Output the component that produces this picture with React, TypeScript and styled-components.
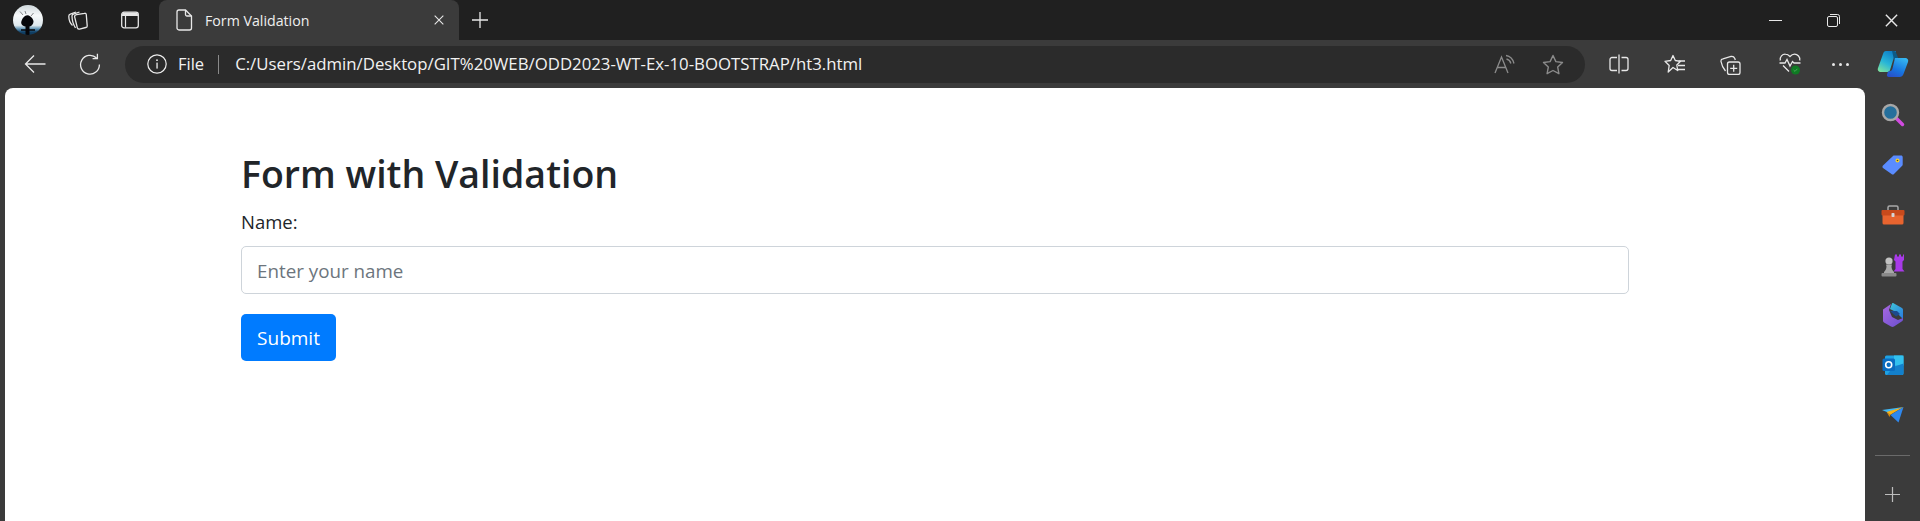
import React, { ReactElement } from "react";
import styled, { createGlobalStyle } from "styled-components";

const stroke = { fill: "none", stroke: "currentColor", strokeWidth: 1.3 };

function Avatar(): ReactElement {
  return (
    <svg width="30" height="30" viewBox="0 0 30 30">
      <defs>
        <linearGradient id="moon" x1="0" y1="0" x2="0" y2="1">
          <stop offset="0" stopColor="#cfd8dc" />
          <stop offset="0.35" stopColor="#f7f9fa" />
          <stop offset="0.68" stopColor="#dfe9ee" />
          <stop offset="0.8" stopColor="#5f93b4" />
          <stop offset="0.9" stopColor="#0f3f66" />
          <stop offset="1" stopColor="#123a58" />
        </linearGradient>
        <clipPath id="disc">
          <circle cx="15" cy="15" r="15" />
        </clipPath>
      </defs>
      <g clipPath="url(#disc)">
        <rect width="30" height="30" fill="url(#moon)" />
        <path d="M12.500 30V21.500C9 21 7.500 18.500 8.500 16c.7-2.300 2-3.700 3.500-5 1.700-1.300 3.800-1 5 .3 1.700 1.300 3.500 3.200 3.500 5.200 0 2.700-1.800 4.500-4 5V30z" fill="#060609" />
        <path d="M8 25h14" stroke="#060609" strokeWidth="1.600" />
        <path d="M10 10L7 6.500M13 9l-1-3M18 11l2.500-3" stroke="#55585c" strokeWidth="0.7" />
      </g>
    </svg>
  );
}

function CollectionsTabs(): ReactElement {
  return (
    <svg width="22" height="22" viewBox="0 0 22 22" {...stroke}>
      <path d="M10.500 5.600l8-1.300c1-.2 1.700.5 1.800 1.400l.9 11c.1 1-.5 1.600-1.400 1.800l-6.300 1.600c-1 .2-1.700-.2-2.100-1.100L8.700 8.200c-.3-1.300.6-2.400 1.800-2.600z" />
      <path d="M9.500 19C7.300 15.500 6 11 6 7c0-1 .6-1.800 1.500-2l6-2" />
      <path d="M6.500 16.500C4 14 2.800 10.500 2.800 7.200c0-1 .5-1.700 1.500-2L10 3" />
    </svg>
  );
}

function VerticalTabs(): ReactElement {
  return (
    <svg width="20" height="20" viewBox="0 0 20 20">
      <rect x="1.700" y="2.200" width="16.600" height="15.600" rx="2.400" fill="none" stroke="#e6e6e6" strokeWidth="1.300" />
      <path d="M2 6V4.400C2 3.200 3 2.400 4 2.400h12c1 0 2 .8 2 2V6z" fill="#e6e6e6" />
      <path d="M5.500 6v11.500" stroke="#e6e6e6" strokeWidth="1.200" />
    </svg>
  );
}

function DocIcon(): ReactElement {
  return (
    <svg width="18" height="22" viewBox="0 0 18 22" {...stroke}>
      <path d="M4 1h6.500L16.500 7v12a2 2 0 0 1-2 2H4a2 2 0 0 1-2-2V3a2 2 0 0 1 2-2z" />
      <path d="M10.500 1v4.500a1.500 1.500 0 0 0 1.500 1.500h4.500" />
    </svg>
  );
}

function Cross({ size }: { size: number }): ReactElement {
  return (
    <svg width={size} height={size} viewBox="0 0 12 12" {...stroke}>
      <path d="M.8.8l10.400 10.400M11.200.8L.8 11.200" />
    </svg>
  );
}

function Plus({ size }: { size: number }): ReactElement {
  return (
    <svg width={size} height={size} viewBox="0 0 16 16" {...stroke}>
      <path d="M8 0v16M0 8h16" />
    </svg>
  );
}

function BackArrow(): ReactElement {
  return (
    <svg width="22" height="20" viewBox="0 0 22 20" {...stroke}>
      <path d="M1.500 10h20M10 1.500L1.500 10l8.500 8.500" />
    </svg>
  );
}

function Reload(): ReactElement {
  return (
    <svg width="22" height="22" viewBox="0 0 22 22" {...stroke}>
      <path d="M17.600 5A9.400 9.400 0 1 0 20.400 11.500" />
      <path d="M18.400 .8V5.600H13.600" />
    </svg>
  );
}

function InfoIcon(): ReactElement {
  return (
    <svg width="20" height="20" viewBox="0 0 20 20">
      <circle cx="10" cy="10" r="9.200" fill="none" stroke="#eee" strokeWidth="1.200" />
      <rect x="9.400" y="8.600" width="1.300" height="6" fill="#eee" />
      <circle cx="10" cy="6.200" r="0.900" fill="#eee" />
    </svg>
  );
}

function ReadAloud(): ReactElement {
  return (
    <svg width="22" height="20" viewBox="0 0 22 20" fill="none" stroke="#8b8b8b" strokeWidth="1.300">
      <path d="M1 19L7.500 3 14 19M3.300 13.500h8.400" />
      <path d="M12 1.500c4 .6 7 3.800 8 8M12.500 5c2.200.5 3.800 2.200 4.400 4.500" />
    </svg>
  );
}

function StarIcon(): ReactElement {
  return (
    <svg width="22" height="21" viewBox="0 0 22 21" fill="none" stroke="#8b8b8b" strokeWidth="1.400" strokeLinejoin="round">
      <path d="M11 1.500l2.900 6.100 6.600.9-4.800 4.600 1.200 6.600-5.900-3.200-5.900 3.200 1.200-6.600L1.500 8.500l6.600-.9z" />
    </svg>
  );
}

function SplitIcon(): ReactElement {
  return (
    <svg width="20" height="20" viewBox="0 0 20 20" {...stroke}>
      <path d="M8 3.500H3a2 2 0 0 0-2 2v9a2 2 0 0 0 2 2h5M12.500 3.500H17a2 2 0 0 1 2 2v9a2 2 0 0 1-2 2h-4.500" />
      <path d="M10 .5v19" />
    </svg>
  );
}

function FavoritesIcon(): ReactElement {
  return (
    <svg width="22" height="20" viewBox="0 0 22 20" {...stroke} strokeLinejoin="round">
      <path d="M9 1.500l2.300 5 5.200.8-3.700 3.700.9 5.500L9 13.500 4.200 18l1-6.500L1 7.300l5.700-.8z" />
      <path d="M14.500 7h6.500M14 11.500h7M14 15.500h7" />
    </svg>
  );
}

function AddCollection(): ReactElement {
  return (
    <svg width="21" height="21" viewBox="0 0 21 21" {...stroke}>
      <rect x="7.500" y="8" width="12.500" height="12.500" rx="2" />
      <path d="M13.700 10.800v7M10.200 14.300h7" />
      <path d="M5.500 17C3 14 1.500 10.500 1 7.500 .8 6 1.500 5 3 4.800l8-2.300c1.500-.3 3 .2 3.800 2l.5 1.500" />
    </svg>
  );
}

function HealthIcon(): ReactElement {
  return (
    <svg width="22" height="22" viewBox="0 0 22 22">
      <path
        d="M10 18.500L4 12.500M1.300 7.500C.5 3.800 3.500 1 6.500 1.200c1.800 0 3.300 1 4.500 2.300C12.200 2.200 13.700 1.200 15.500 1.200c3 0 6 2.800 5.200 6.300"
        fill="none"
        stroke="#e8e8e8"
        strokeWidth="1.300"
      />
      <path d="M.5 10H6l2-3.500 3 6.500 2.500-4.500 1.500 1.500h6.500" fill="none" stroke="#e8e8e8" strokeWidth="1.300" />
      <circle cx="16.500" cy="17" r="4.500" fill="#0f7b23" />
      <path d="M14.600 17l1.400 1.400 2.400-2.600" fill="none" stroke="#46a85a" strokeWidth="1" />
    </svg>
  );
}

function Copilot(): ReactElement {
  return (
    <svg width="32" height="28" viewBox="0 0 32 28">
      <defs>
        <linearGradient id="copA" x1="0.2" y1="1" x2="0.7" y2="0">
          <stop offset="0" stopColor="#7be0a0" />
          <stop offset="0.45" stopColor="#28b6d8" />
          <stop offset="1" stopColor="#0f7fc8" />
        </linearGradient>
        <linearGradient id="copB" x1="0.7" y1="0" x2="0.2" y2="1">
          <stop offset="0" stopColor="#34b4f0" />
          <stop offset="0.6" stopColor="#1774e0" />
          <stop offset="1" stopColor="#2a4fc8" />
        </linearGradient>
      </defs>
      <path d="M9 1h10l-6 19c-.5 1.500-1.500 2-3 2H4c-2.500 0-3.800-1.800-3-4L6 4c.5-2 1.500-3 3-3z" fill="url(#copA)" />
      <path d="M15 .8c2-.3 4 .5 4.500 3l2.500 6h-5z" fill="#0d5a86" />
      <path d="M18 8h10c2.500 0 3.800 1.800 3 4l-4.500 12c-.7 2-2 3-4 3H12c-1.500 0-2.500-1-2-2.500l1-3c3 0 4-1 4.500-3z" fill="url(#copB)" />
    </svg>
  );
}

function SearchApp(): ReactElement {
  return (
    <svg width="24" height="24" viewBox="0 0 24 24">
      <path d="M14.500 14.500l7 7" stroke="#d14be0" strokeWidth="3.500" strokeLinecap="round" />
      <circle cx="9.500" cy="9.500" r="7.500" fill="#256f9c" stroke="#a7a7a7" strokeWidth="2.400" />
    </svg>
  );
}

function TagApp(): ReactElement {
  return (
    <svg width="22" height="22" viewBox="0 0 22 22">
      <path d="M1 11.500L11 2c.4-.4.8-.5 1.300-.5H19c1 0 1.700.7 1.700 1.700v7.400c0 .5-.2.900-.5 1.200L12 20c-.7.700-1.800.7-2.500 0L1 14c-.7-.7-.7-1.800 0-2.500z" fill="#5a8cff" />
      <circle cx="15.500" cy="6.500" r="2" fill="#f8d22c" />
      <circle cx="15.500" cy="6.500" r="0.800" fill="#4a4a30" />
    </svg>
  );
}

function ToolboxApp(): ReactElement {
  return (
    <svg width="24" height="20" viewBox="0 0 24 20">
      <path d="M7 5V2.500C7 1.500 7.500 1 8.500 1h7c1 0 1.500.5 1.500 1.500V5" fill="none" stroke="#a9a9a9" strokeWidth="1.500" />
      <rect x="1.500" y="6" width="21" height="13.500" rx="1.500" fill="#e8642f" />
      <rect x="0.500" y="5" width="23" height="5.500" rx="1" fill="#c84a1c" />
      <rect x="10.500" y="8" width="3" height="4" rx="0.800" fill="#d6d6d6" />
    </svg>
  );
}

function ChessApp(): ReactElement {
  return (
    <svg width="24" height="24" viewBox="0 0 24 24">
      <path d="M14 1.500h2v2h2v-2h2v2h2v-2h1V7l-1.500 1.500V16l2 2.500H12.500l2-2.500V8.500L13 7z" fill="#a83ae8" />
      <circle cx="8" cy="8" r="3.600" fill="#c2c2c2" />
      <path d="M5 11.500h6l-.5 2c0 2 1 4 2.500 5.500v1H3v-1c1.500-1.500 2.500-3.500 2.500-5.500z" fill="#a9a9a9" />
      <rect x="0.500" y="20" width="15" height="3.500" rx="1" fill="#8a8a8a" />
    </svg>
  );
}

function BingApp(): ReactElement {
  return (
    <svg width="22" height="24" viewBox="0 0 22 24">
      <defs>
        <linearGradient id="bingTop" x1="0" y1="0" x2="1" y2="1">
          <stop offset="0" stopColor="#3fc4d8" />
          <stop offset="1" stopColor="#2a7ae0" />
        </linearGradient>
        <linearGradient id="bingLow" x1="0" y1="0" x2="1" y2="1">
          <stop offset="0" stopColor="#a868e0" />
          <stop offset="1" stopColor="#6a4fd0" />
        </linearGradient>
      </defs>
      <path d="M10.500 0c.5 0 1 .1 1.500.4l8 4.600c.6.400 1 1 1 1.800V16l-7-7-6-3 2-5.500z" fill="url(#bingTop)" />
      <path d="M1 6.500L9 1 7 7l3 7 6 3 5-2v1.500c0 .8-.4 1.500-1 1.800L12 23.500c-.9.600-2 .6-3 0L2 19.500c-.6-.4-1-1-1-1.800z" fill="url(#bingLow)" />
      <path d="M8 8h7l3 3-4 2.500z" fill="#1d4a8c" />
    </svg>
  );
}

function OutlookApp(): ReactElement {
  return (
    <svg width="22" height="20" viewBox="0 0 22 20">
      <rect x="3" y="0.500" width="18.500" height="19.500" rx="1.500" fill="#1ea2e4" />
      <rect x="12" y="0.500" width="9.500" height="10" fill="#32c1ef" />
      <path d="M11 12l10.500-3.500V18a2 2 0 0 1-2 2H5z" fill="#1380cc" />
      <rect x="0.500" y="3.500" width="12.500" height="12.500" rx="1.500" fill="#0a6cc0" />
      <circle cx="6.700" cy="9.700" r="3" fill="none" stroke="#fff" strokeWidth="1.600" />
    </svg>
  );
}

function SendApp(): ReactElement {
  return (
    <svg width="22" height="16" viewBox="0 0 22 16">
      <path d="M0 3l21.500-3L6 5.500z" fill="#3fb7f4" />
      <path d="M4.500 5L21.500 0 8 8z" fill="#f6b21a" />
      <path d="M5 5.500l2.500 4.500 1-2.500z" fill="#d68a10" />
      <path d="M21.500 0l-5 15.500-8-7.500z" fill="#2f88ee" />
    </svg>
  );
}

export default function App(): ReactElement {
  return (
    <Frame>
      <GlobalStyle />
      <TabStrip>
        <Slot $w={40} $ml={8}>
          <Avatar />
        </Slot>
        <Slot $w={40} $ml={9}>
          <CollectionsTabs />
        </Slot>
        <Slot $w={40} $ml={13}>
          <VerticalTabs />
        </Slot>
        <Tab>
          <DocIcon />
          <TabTitle>Form Validation</TabTitle>
          <TabClose>
            <Cross size={10} />
          </TabClose>
        </Tab>
        <Slot $w={40} $ml={1}>
          <Plus size={16} />
        </Slot>
        <Spacer />
        <WindowButton>
          <MinimizeLine />
        </WindowButton>
        <WindowButton>
          <svg width="13" height="13" viewBox="0 0 13 13" {...stroke} strokeWidth={1}>
            <rect x="0.500" y="2.500" width="10" height="10" rx="1.500" />
            <path d="M3 .5h7.500a2 2 0 0 1 2 2V10" />
          </svg>
        </WindowButton>
        <WindowButton>
          <Cross size={13} />
        </WindowButton>
      </TabStrip>

      <Toolbar>
        <Slot $w={40} $ml={15}>
          <BackArrow />
        </Slot>
        <Slot $w={40} $ml={15}>
          <Reload />
        </Slot>
        <AddressBar>
          <InfoIcon />
          <FileLabel>File</FileLabel>
          <AddressDivider />
          <Url>C:/Users/admin/Desktop/GIT%20WEB/ODD2023-WT-Ex-10-BOOTSTRAP/ht3.html</Url>
          <Spacer />
          <Slot $w={48} $ml={0}>
            <ReadAloud />
          </Slot>
          <Slot $w={48} $ml={0}>
            <StarIcon />
          </Slot>
        </AddressBar>
        <Slot $w={40} $ml={14}>
          <SplitIcon />
        </Slot>
        <Slot $w={40} $ml={16}>
          <FavoritesIcon />
        </Slot>
        <Slot $w={40} $ml={15}>
          <AddCollection />
        </Slot>
        <Slot $w={40} $ml={20}>
          <HealthIcon />
        </Slot>
        <Slot $w={40} $ml={10}>
          <Dots>
            <Dot />
            <Dot />
            <Dot />
          </Dots>
        </Slot>
        <Slot $w={40} $ml={13}>
          <Copilot />
        </Slot>
      </Toolbar>

      <Body>
        <Page>
          <Heading>Form with Validation</Heading>
          <form onSubmit={(e) => e.preventDefault()}>
            <Label htmlFor="name">Name:</Label>
            <Input id="name" type="text" placeholder="Enter your name" />
            <SubmitButton type="submit">Submit</SubmitButton>
          </form>
        </Page>
        <Sidebar>
          <SideItem>
            <SearchApp />
          </SideItem>
          <SideItem>
            <TagApp />
          </SideItem>
          <SideItem>
            <ToolboxApp />
          </SideItem>
          <SideItem>
            <ChessApp />
          </SideItem>
          <SideItem>
            <BingApp />
          </SideItem>
          <SideItem>
            <OutlookApp />
          </SideItem>
          <SideItem>
            <SendApp />
          </SideItem>
          <SideDivider />
          <SidePlus>
            <Plus size={15} />
          </SidePlus>
        </Sidebar>
      </Body>
    </Frame>
  );
}

const GlobalStyle = createGlobalStyle`
  html, body {
    margin: 0;
    padding: 0;
    overflow: hidden;
    background: #3b3b3b;
  }
  * {
    box-sizing: border-box;
  }
`;

const Frame = styled.div`
  display: flex;
  flex-direction: column;
  width: 1920px;
  height: 521px;
  overflow: hidden;
  background: #3b3b3b;
  color: #e8e8e8;
  font-family: "Open Sans", "Noto Sans", sans-serif;
`;

const TabStrip = styled.div`
  display: flex;
  align-items: center;
  flex: 0 0 40px;
  background: #202020;
`;

const Slot = styled.div<{ $w: number; $ml: number }>`
  display: flex;
  align-items: center;
  justify-content: center;
  flex: 0 0 ${(p) => p.$w}px;
  width: ${(p) => p.$w}px;
  margin-left: ${(p) => p.$ml}px;
`;

const Tab = styled.div`
  display: flex;
  align-items: center;
  align-self: stretch;
  flex: 0 0 300px;
  margin-left: 9px;
  padding: 0 15px 0 16px;
  background: #3b3b3b;
  border-radius: 8px 8px 0 0;
`;

const TabTitle = styled.span`
  flex: 1;
  margin-left: 12px;
  font-size: 14.2px;
  color: #efefef;
`;

const TabClose = styled.span`
  display: flex;
`;

const Spacer = styled.div`
  flex: 1;
`;

const WindowButton = styled.div`
  display: flex;
  align-items: center;
  justify-content: center;
  flex: 0 0 58px;
`;

const MinimizeLine = styled.span`
  display: block;
  width: 13px;
  height: 1px;
  background: #e8e8e8;
`;

const Toolbar = styled.div`
  display: flex;
  align-items: center;
  flex: 0 0 48px;
  background: #3b3b3b;
`;

const AddressBar = styled.div`
  display: flex;
  align-items: center;
  flex: 0 0 1460px;
  height: 37px;
  margin-left: 15px;
  padding: 0 8px 0 22px;
  background: #2b2b2b;
  border-radius: 19px;
`;

const FileLabel = styled.span`
  margin-left: 11px;
  margin-bottom: 2px;
  font-size: 16.5px;
  color: #f2f2f2;
`;

const AddressDivider = styled.span`
  width: 1px;
  height: 19px;
  margin: 0 16px 0 14px;
  background: #8a8a8a;
`;

const Url = styled.span`
  margin-bottom: 2px;
  font-size: 16.8px;
  color: #f2f2f2;
  white-space: nowrap;
`;

const Dots = styled.div`
  display: flex;
  gap: 4px;
`;

const Dot = styled.span`
  width: 3px;
  height: 3px;
  border-radius: 50%;
  background: #e8e8e8;
`;

const Body = styled.div`
  display: flex;
  flex: 1;
  min-height: 0;
  padding-left: 5px;
`;

const Page = styled.main`
  flex: 0 0 1860px;
  padding: 62px 236px 0;
  background: #fff;
  border-radius: 8px 8px 0 0;
  color: #212529;
`;

const Heading = styled.h1`
  margin: 0 0 9px;
  font-size: 37.5px;
  font-weight: 600;
  line-height: 48px;
  color: #212529;
`;

const Label = styled.label`
  display: block;
  margin-bottom: 9px;
  font-size: 18.5px;
  line-height: 30px;
`;

const Input = styled.input`
  display: block;
  width: 100%;
  height: 48px;
  margin-bottom: 20px;
  padding: 1px 15px 0;
  font-family: inherit;
  font-size: 18.8px;
  color: #495057;
  background: #fff;
  border: 1px solid #ced4da;
  border-radius: 5px;
  &::placeholder {
    color: #6c757d;
    opacity: 1;
  }
`;

const SubmitButton = styled.button`
  display: block;
  width: 95px;
  height: 47px;
  padding: 0;
  font-family: inherit;
  font-size: 19px;
  color: #fff;
  background: #007bff;
  border: 0;
  border-radius: 5px;
`;

const Sidebar = styled.aside`
  display: flex;
  flex-direction: column;
  align-items: center;
  flex: 0 0 55px;
  padding-top: 2px;
`;

const SideItem = styled.div`
  display: flex;
  align-items: center;
  justify-content: center;
  flex: 0 0 50px;
  width: 100%;
`;

const SideDivider = styled.div`
  width: 35px;
  height: 1px;
  margin-top: 15px;
  background: #6a6a6a;
`;

const SidePlus = styled.div`
  display: flex;
  margin-top: 31px;
  color: #bdbdbd;
`;
